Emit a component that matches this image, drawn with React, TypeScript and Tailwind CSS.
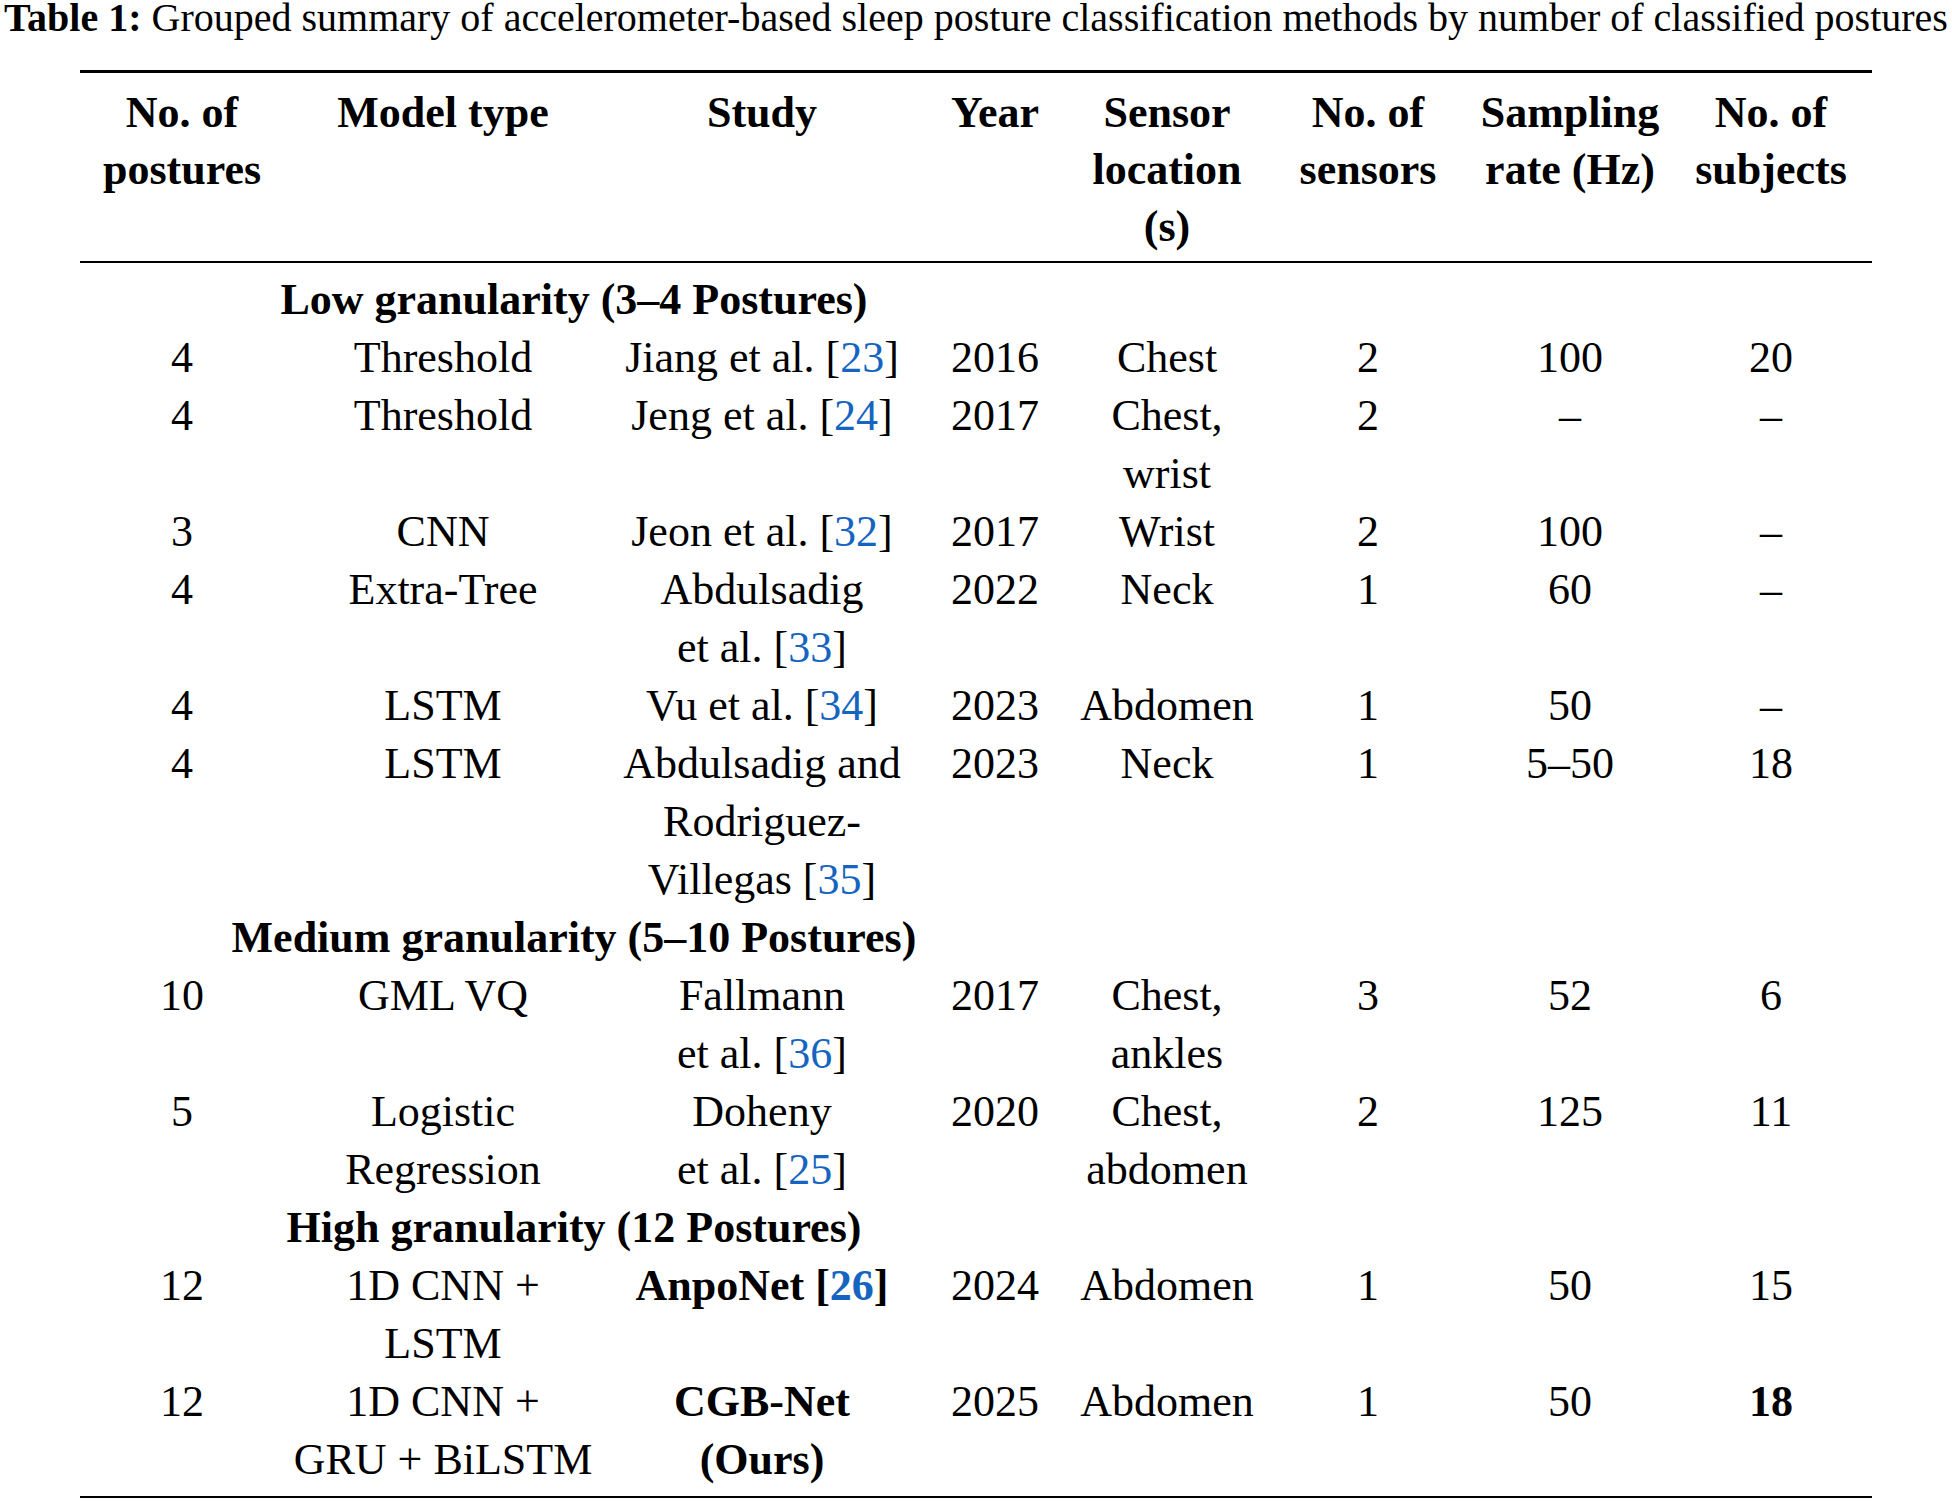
import type { ReactNode } from 'react';

type Cell = ReactNode[];

interface Row {
  group?: string;
  cells?: Cell[];
}

const Ref = ({ n }: { n: number }) => (
  <>
    [<span className="text-[#1565c0]">{n}</span>]
  </>
);

const cols = 'grid grid-cols-[204px_318px_320px_146px_198px_204px_200px_202px]';

const header: Cell[] = [
  ['No. of', 'postures'],
  ['Model type'],
  ['Study'],
  ['Year'],
  ['Sensor', 'location', '(s)'],
  ['No. of', 'sensors'],
  ['Sampling', 'rate (Hz)'],
  ['No. of', 'subjects'],
];

const rows: Row[] = [
  { group: 'Low granularity (3–4 Postures)' },
  {
    cells: [['4'], ['Threshold'], [<>Jiang et al. <Ref n={23} /></>], ['2016'], ['Chest'], ['2'], ['100'], ['20']],
  },
  {
    cells: [['4'], ['Threshold'], [<>Jeng et al. <Ref n={24} /></>], ['2017'], ['Chest,', 'wrist'], ['2'], ['–'], ['–']],
  },
  {
    cells: [['3'], ['CNN'], [<>Jeon et al. <Ref n={32} /></>], ['2017'], ['Wrist'], ['2'], ['100'], ['–']],
  },
  {
    cells: [['4'], ['Extra-Tree'], ['Abdulsadig', <>et al. <Ref n={33} /></>], ['2022'], ['Neck'], ['1'], ['60'], ['–']],
  },
  {
    cells: [['4'], ['LSTM'], [<>Vu et al. <Ref n={34} /></>], ['2023'], ['Abdomen'], ['1'], ['50'], ['–']],
  },
  {
    cells: [
      ['4'],
      ['LSTM'],
      ['Abdulsadig and', 'Rodriguez-', <>Villegas <Ref n={35} /></>],
      ['2023'],
      ['Neck'],
      ['1'],
      ['5–50'],
      ['18'],
    ],
  },
  { group: 'Medium granularity (5–10 Postures)' },
  {
    cells: [['10'], ['GML VQ'], ['Fallmann', <>et al. <Ref n={36} /></>], ['2017'], ['Chest,', 'ankles'], ['3'], ['52'], ['6']],
  },
  {
    cells: [
      ['5'],
      ['Logistic', 'Regression'],
      ['Doheny', <>et al. <Ref n={25} /></>],
      ['2020'],
      ['Chest,', 'abdomen'],
      ['2'],
      ['125'],
      ['11'],
    ],
  },
  { group: 'High granularity (12 Postures)' },
  {
    cells: [
      ['12'],
      ['1D CNN +', 'LSTM'],
      [<b>AnpoNet <Ref n={26} /></b>],
      ['2024'],
      ['Abdomen'],
      ['1'],
      ['50'],
      ['15'],
    ],
  },
  {
    cells: [
      ['12'],
      ['1D CNN +', 'GRU + BiLSTM'],
      [<b>CGB-Net</b>, <b>(Ours)</b>],
      ['2025'],
      ['Abdomen'],
      ['1'],
      ['50'],
      [<b>18</b>],
    ],
  },
];

function Lines({ lines }: { lines: Cell }) {
  return (
    <div className="flex flex-col items-center text-center whitespace-nowrap">
      {lines.map((l, i) => (
        <span key={i}>{l}</span>
      ))}
    </div>
  );
}

export default function App() {
  return (
    <div className="w-[1952px] min-h-[1501px] bg-white text-black font-['Liberation_Serif',serif]">
      <p className="text-center whitespace-nowrap text-[40px] leading-[36px]">
        <b>Table 1:</b> Grouped summary of accelerometer-based sleep posture classification methods by number
        of classified postures
      </p>

      <div className="ml-[80px] w-[1792px] mt-[34px] text-[44px]">
        <div className="h-[3px] bg-black" />

        <div className={`${cols} pt-[11px] leading-[57px] font-bold`}>
          {header.map((c, i) => (
            <Lines key={i} lines={c} />
          ))}
        </div>

        <div className="h-[2px] bg-black mt-[6px]" />

        <div className="pt-[8px] pb-[7px] leading-[58px]">
          {rows.map((r, i) =>
            r.group ? (
              <div key={i} className={cols}>
                <div className="col-span-4 text-center font-bold whitespace-nowrap">{r.group}</div>
              </div>
            ) : (
              <div key={i} className={cols}>
                {r.cells!.map((c, j) => (
                  <Lines key={j} lines={c} />
                ))}
              </div>
            )
          )}
        </div>

        <div className="h-[2px] bg-black" />
      </div>
    </div>
  );
}
